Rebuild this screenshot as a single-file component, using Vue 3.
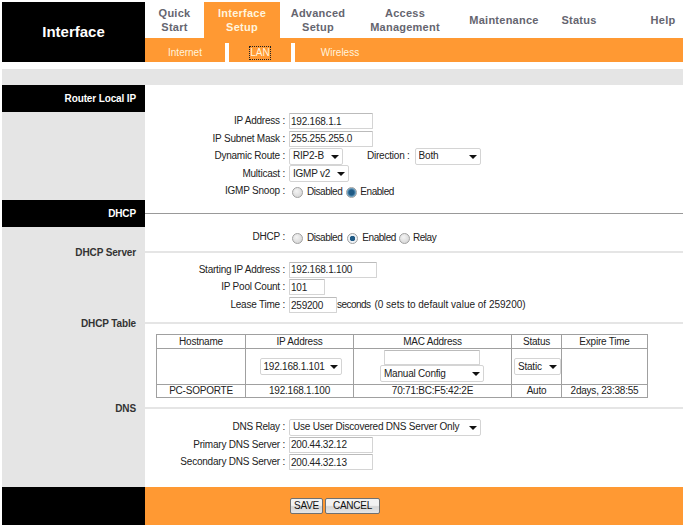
<script setup>
const tabs = [
  { id: 'quick', lines: ['Quick', 'Start'] },
  { id: 'iface', lines: ['Interface', 'Setup'] },
  { id: 'adv', lines: ['Advanced', 'Setup'] },
  { id: 'access', lines: ['Access', 'Management'] },
  { id: 'maint', lines: ['Maintenance'] },
  { id: 'status', lines: ['Status'] },
]
</script>

<template>
  <div class="page">
    <header class="top">
      <div class="brand">Interface</div>
      <div class="nav">
        <div class="tabs">
          <div v-for="t in tabs" :key="t.id" class="tab" :class="'tab-' + t.id">
            <span v-for="l in t.lines" :key="l">{{ l }}</span>
          </div>
          <div class="tab tab-help"><span>Help</span></div>
        </div>
        <div class="subnav">
          <div class="sub sub-internet">Internet</div>
          <i class="sep"></i>
          <div class="sub sub-lan"><span class="focus">LAN</span></div>
          <i class="sep"></i>
          <div class="sub sub-wireless">Wireless</div>
        </div>
      </div>
    </header>

    <div class="band"></div>

    <section class="sec sec-lan">
      <div class="side">
        <div class="head">Router Local IP</div>
      </div>
      <div class="main">
        <div class="fld f18"><label>IP Address :</label><input class="txt w84" value="192.168.1.1" /></div>
        <div class="fld f17"><label>IP Subnet Mask :</label><input class="txt w84" value="255.255.255.0" /></div>
        <div class="fld f18">
          <label>Dynamic Route :</label>
          <span class="sel w55"><select><option>RIP2-B</option></select></span>
          <span class="dir">Direction :</span>
          <span class="sel w65"><select><option>Both</option></select></span>
        </div>
        <div class="fld f17"><label>Multicast :</label><span class="sel w61"><select><option>IGMP v2</option></select></span></div>
        <div class="fld f18">
          <label>IGMP Snoop :</label>
          <span class="radios">
            <input type="radio" name="snoop" /><span>Disabled</span>
            <input type="radio" name="snoop" class="dark" checked /><span>Enabled</span>
          </span>
        </div>
      </div>
    </section>

    <section class="sec">
      <div class="side"><div class="head">DHCP</div></div>
      <div class="main rule"><hr class="dark-line" /></div>
    </section>

    <section class="sec">
      <div class="side"></div>
      <div class="main">
        <div class="fld f18 low">
          <label>DHCP :</label>
          <span class="radios">
            <input type="radio" name="dhcp" /><span>Disabled</span>
            <input type="radio" name="dhcp" checked /><span>Enabled</span>
            <input type="radio" name="dhcp" class="tight" /><span>Relay</span>
          </span>
        </div>
      </div>
    </section>

    <section class="sec sub-head">
      <div class="side"><div class="label">DHCP Server</div></div>
      <div class="main rule"><hr /></div>
    </section>

    <section class="sec">
      <div class="side"></div>
      <div class="main pad-server">
        <div class="fld f17"><label>Starting IP Address :</label><input class="txt w88" value="192.168.1.100" /></div>
        <div class="fld f18"><label>IP Pool Count :</label><input class="txt w36" value="101" /></div>
        <div class="fld f18">
          <label>Lease Time :</label><input class="txt w48" value="259200" />
          <span class="after">seconds</span><span class="note">(0 sets to default value of 259200)</span>
        </div>
      </div>
    </section>

    <section class="sec sub-head">
      <div class="side"><div class="label">DHCP Table</div></div>
      <div class="main rule"><hr /></div>
    </section>

    <section class="sec">
      <div class="side"></div>
      <div class="main pad-table">
        <table class="tbl">
          <thead>
            <tr><th class="c1">Hostname</th><th class="c2">IP Address</th><th class="c3">MAC Address</th><th class="c4">Status</th><th class="c5">Expire Time</th></tr>
          </thead>
          <tbody>
            <tr class="edit">
              <td></td>
              <td><span class="sel w80"><select><option>192.168.1.101</option></select></span></td>
              <td class="mac">
                <input class="txt w96" />
                <span class="sel w100"><select><option>Manual Config</option></select></span>
              </td>
              <td><span class="sel w46"><select><option>Static</option></select></span></td>
              <td></td>
            </tr>
            <tr><td>PC-SOPORTE</td><td>192.168.1.100</td><td>70:71:BC:F5:42:2E</td><td>Auto</td><td>2days, 23:38:55</td></tr>
          </tbody>
        </table>
      </div>
    </section>

    <section class="sec sub-head">
      <div class="side"><div class="label">DNS</div></div>
      <div class="main rule"><hr /></div>
    </section>

    <section class="sec">
      <div class="side"></div>
      <div class="main pad-dns">
        <div class="fld f18"><label>DNS Relay :</label><span class="sel w191"><select><option>Use User Discovered DNS Server Only</option></select></span></div>
        <div class="fld f17"><label>Primary DNS Server :</label><input class="txt w84" value="200.44.32.12" /></div>
        <div class="fld f18"><label>Secondary DNS Server :</label><input class="txt w84" value="200.44.32.13" /></div>
      </div>
    </section>

    <footer class="foot">
      <div class="foot-side"></div>
      <div class="foot-main">
        <button class="btn save">SAVE</button>
        <button class="btn cancel">CANCEL</button>
      </div>
    </footer>
  </div>
</template>

<style>
html, body { background: #fff; }
</style>

<style scoped>
.page {
  width: 681px;
  margin: 2px 0 0 2px;
  font: 10px/12px "Liberation Sans", Arial, sans-serif;
  letter-spacing: -.22px;
  color: #222;
}
.top { display: flex; height: 60px; letter-spacing: 0; }
.brand {
  width: 143px;
  background: #000;
  color: #fff;
  font-size: 15px;
  font-weight: bold;
  display: flex;
  align-items: center;
  justify-content: center;
}
.nav { flex: 1; display: flex; flex-direction: column; }
.tabs { display: flex; height: 36px; }
.tab {
  display: flex;
  flex-direction: column;
  align-items: center;
  justify-content: center;
  color: #65656f;
  font-size: 11px;
  font-weight: bold;
  line-height: 14px;
  letter-spacing: .25px;
}
.tab-quick { width: 59px; }
.tab-iface { width: 76px; background: #f93; color: #fff4dd; }
.tab-adv { width: 76px; }
.tab-access { width: 98px; }
.tab-maint { width: 100px; }
.tab-status { width: 50px; }
.tab-help { width: 40px; margin-left: auto; }
.subnav { display: flex; height: 24px; background: #f93; color: #fff4dd; }
.sub { display: flex; align-items: center; justify-content: center; padding-top: 5px; box-sizing: border-box; }
.sub-internet { width: 80px; }
.sub-lan { width: 62px; }
.sub-wireless { width: 90px; }
.focus { outline: 1px dotted #222; outline-offset: 0; }
.sep { width: 4px; height: 19px; margin-top: 5px; background: #fff; }
.band { height: 16px; margin-top: 7px; background: #e5e5e5; }

.sec { display: flex; }
.side { width: 143px; flex: none; background: #e5e5e5; }
.main { flex: 1; min-width: 0; }
.head {
  height: 27px;
  background: #000;
  color: #fff;
  font-weight: bold;
  letter-spacing: -.13px;
  line-height: 27px;
  text-align: right;
  padding-right: 9px;
}
.sec-lan { height: 115px; }
.sec-lan .main { padding-top: 27px; }
.rule { display: flex; align-items: center; }
hr { flex: 1; margin: 0; border: 0; height: 2px; background: #e5e5e5; }
hr.dark-line { height: 1px; background: #999; }
.sub-head { height: 14px; }
.label { font-weight: bold; letter-spacing: -.13px; color: #333; line-height: 13px; padding-top: 1px; text-align: right; padding-right: 9px; }
.fld { display: flex; align-items: center; box-sizing: border-box; }
.f17 { height: 17px; }
.f18 { height: 18px; }
.low { padding-top: 2px; }
label { width: 142px; flex: none; text-align: right; padding-right: 2px; box-sizing: border-box; }
.txt {
  height: 16px;
  box-sizing: border-box;
  border: 1px solid #d4d4d4;
  border-top-color: #bbb;
  border-radius: 1px;
  padding: 0 1px;
  margin: 0 0 0 2px;
  font: inherit;
  letter-spacing: inherit;
  color: #222;
  background: #fff;
}
.w84 { width: 84px; }
.w88 { width: 88px; }
.w36 { width: 36px; }
.w48 { width: 48px; }
.w96 { width: 96px; margin: 0; }
.sel { position: relative; display: inline-block; height: 17px; margin-left: 2px; }
.sel select {
  appearance: none;
  -webkit-appearance: none;
  display: block;
  width: 100%;
  height: 100%;
  box-sizing: border-box;
  border: 1px solid #d4d4d4;
  border-radius: 2px;
  padding: 0 12px 0 3px;
  font: inherit;
  letter-spacing: inherit;
  color: #222;
  background: #fff;
}
.sel::after {
  content: "";
  position: absolute;
  right: 4px;
  top: 7px;
  border: 4px solid transparent;
  border-top: 4px solid #111;
  border-bottom: 0;
  pointer-events: none;
}
.w55 { width: 54px; }
.w65 { width: 66px; }
.w61 { width: 60px; }
.w80 { width: 82px; }
.w100 { width: 104px; }
.w46 { width: 47px; }
.w191 { width: 192px; }
.dir { margin-left: 24px; margin-right: 3px; }
.radios { display: flex; align-items: center; margin-left: 3px; padding-top: 2px; letter-spacing: -.45px; }
.radios input {
  appearance: none;
  -webkit-appearance: none;
  width: 11px;
  height: 11px;
  margin: 0 4px 0 2px;
  border-radius: 50%;
  border: 1px solid #a0a0a0;
  background: radial-gradient(circle at 40% 35%, #f4f4f4, #cfcfcf);
  box-sizing: border-box;
}
.radios span + input { margin-left: 5px; }
.radios span + input.dark { margin-left: 4px; margin-right: 3px; }
.radios span + input.tight { margin-left: 3px; margin-right: 3px; }
.radios input:checked {
  background: radial-gradient(circle, #1f5a85 0 2.5px, #eef2f6 3px);
}
.radios input.dark:checked {
  background: radial-gradient(circle, #1f5a85 0 2.5px, #7fb0cf 4.5px);
}
.after { margin-left: 0; letter-spacing: -.55px; }
.note { margin-left: 4px; letter-spacing: 0; }
.pad-server { padding-top: 2px; padding-bottom: 2px; }
.pad-table { padding: 4px 0 3px 11px; }
.tbl {
  width: 492px;
  table-layout: fixed;
  border-collapse: separate;
  border-spacing: 0;
  border: 1px solid #a0a0a0;
  text-align: center;
}
.tbl th, .tbl td {
  box-sizing: border-box;
  font-weight: normal;
  padding: 0;
  height: 13px;
  border-left: 1px solid #a0a0a0;
  border-top: 1px solid #a0a0a0;
}
.tbl th { border-top: 0; }
.tbl th:first-child, .tbl td:first-child { border-left: 0; }
.c1 { width: 88px; }
.c2 { width: 108px; }
.c3 { width: 158px; }
.c4 { width: 50px; }
.edit td { height: 36px; }
.mac { vertical-align: top; }
.mac .txt { display: block; margin: 1px 0 0 30px; height: 15px; }
.mac .sel { display: block; margin: 0 0 0 26px; }
.pad-dns { padding-top: 3px; padding-bottom: 16px; }
.foot { display: flex; height: 38px; }
.foot-side { width: 143px; background: #000; }
.foot-main { flex: 1; background: #f93; display: flex; align-items: center; gap: 2px; padding-left: 145px; box-sizing: border-box; }
.btn {
  height: 16px;
  padding: 0;
  border: 1px solid #707070;
  border-radius: 2px;
  font: inherit;
  letter-spacing: inherit;
  color: #111;
  background: linear-gradient(#f2f2f2 0 45%, #d6d6d6 55%, #e6e6e6);
}
.save { width: 33px; }
.cancel { width: 55px; }
</style>
